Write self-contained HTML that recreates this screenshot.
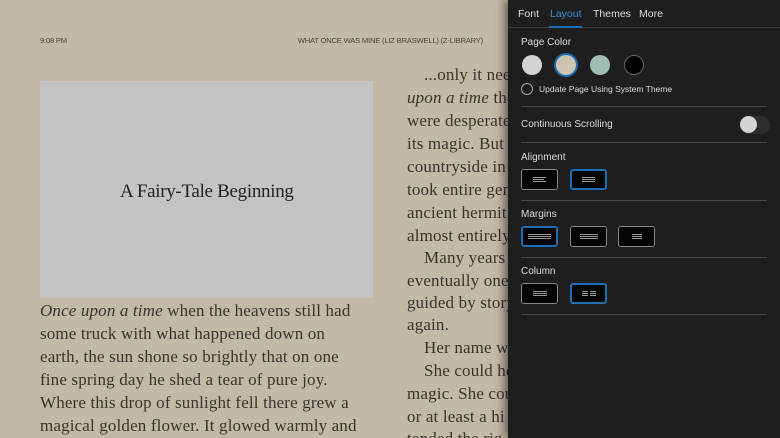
<!DOCTYPE html>
<html><head><meta charset="utf-8"><style>
*{margin:0;padding:0;box-sizing:border-box}
html,body{width:780px;height:438px;overflow:hidden}
body{background:#c2b9a6;position:relative;font-family:"Liberation Serif",serif;color:#3a332b}
.hd{position:absolute;top:36px;font:7.6px "Liberation Sans",sans-serif;color:#4a4438;letter-spacing:-0.2px;white-space:nowrap}
.img{position:absolute;left:40px;top:81px;width:333px;height:217px;background:#c4c4c4}
.ttl{position:absolute;left:120px;top:181px;font:19px "Liberation Serif",serif;color:#222;letter-spacing:-0.3px}
.l{position:absolute;white-space:nowrap;font-size:17px;line-height:23px;letter-spacing:0.15px}
.panel{position:absolute;left:508px;top:0;width:272px;height:438px;background:#1e1e1e;box-shadow:-4px 0 8px rgba(0,0,0,.45);font-family:"Liberation Sans",sans-serif;color:#ddd}
.p{position:absolute;font-size:10px;white-space:nowrap}
.tab{position:absolute;top:8px;font-size:10.5px;color:#ddd;white-space:nowrap}
.div{position:absolute;left:13px;width:246px;height:1px;background:#4a4a4a}
.c{position:absolute;top:55px;width:20px;height:20px;border-radius:50%}
.b{position:absolute;width:37px;height:21px;border:1px solid #888;border-radius:3px;background:#050505}
.b.s{border:2px solid #1a6fb5}
.ln{position:absolute;height:1px;background:#999}
</style></head><body>
<div class="hd" style="left:40px">9:08 PM</div>
<div class="hd" style="right:297px">WHAT ONCE WAS MINE (LIZ BRASWELL) (Z-LIBRARY)</div>
<div class="img"></div>
<div class="ttl">A Fairy-Tale Beginning</div>
<div class="l" style="left:40px;top:299px"><i>Once upon a time</i> when the heavens still had</div>
<div class="l" style="left:40px;top:322px">some truck with what happened down on</div>
<div class="l" style="left:40px;top:345px">earth, the sun shone so brightly that on one</div>
<div class="l" style="left:40px;top:368px">fine spring day he shed a tear of pure joy.</div>
<div class="l" style="left:40px;top:391px">Where this drop of sunlight fell there grew a</div>
<div class="l" style="left:40px;top:414px">magical golden flower. It glowed warmly and</div>

<div class="l" style="left:424px;top:63px">...only it needed</div>
<div class="l" style="left:407px;top:86px"><i>upon a time</i> the</div>
<div class="l" style="left:407px;top:109px">were desperate</div>
<div class="l" style="left:407px;top:132px">its magic. But</div>
<div class="l" style="left:407px;top:155px">countryside in</div>
<div class="l" style="left:407px;top:178px">took entire gen</div>
<div class="l" style="left:407px;top:201px">ancient hermit</div>
<div class="l" style="left:407px;top:224px">almost entirely</div>
<div class="l" style="left:424px;top:246px">Many years</div>
<div class="l" style="left:407px;top:269px">eventually one</div>
<div class="l" style="left:407px;top:291px">guided by story</div>
<div class="l" style="left:407px;top:313px">again.</div>
<div class="l" style="left:424px;top:336px">Her name was</div>
<div class="l" style="left:424px;top:359px">She could he</div>
<div class="l" style="left:407px;top:382px">magic. She cou</div>
<div class="l" style="left:407px;top:405px">or at least a hi</div>
<div class="l" style="left:407px;top:427px">tended the rig</div>

<div class="panel">
<div class="tab" style="left:10px">Font</div>
<div class="tab" style="left:42px;color:#3d8fd6">Layout</div>
<div class="tab" style="left:85px">Themes</div>
<div class="tab" style="left:131px">More</div>
<div style="position:absolute;left:0;top:27px;width:272px;height:1px;background:#3c3c3c"></div>
<div style="position:absolute;left:41px;top:26px;width:33px;height:2px;background:#1a6fb5"></div>
<div class="p" style="left:13px;top:37px">Page Color</div>
<div class="c" style="left:14px;background:#d3d3d3"></div>
<div class="c" style="left:48px;background:#cdc4b1;box-shadow:0 0 0 2px #1a6fb5"></div>
<div class="c" style="left:82px;background:#9fbdb2"></div>
<div class="c" style="left:116px;background:#000;border:1px solid #666"></div>
<div style="position:absolute;left:13px;top:83px;width:12px;height:12px;border:1px solid #aaa;border-radius:50%"></div>
<div class="p" style="left:31px;top:84px;font-size:8.5px">Update Page Using System Theme</div>
<div class="div" style="top:106px"></div>
<div class="p" style="left:13px;top:119px">Continuous Scrolling</div>
<div style="position:absolute;left:232px;top:116px;width:30px;height:18px;border-radius:9px;background:#2d2d2d"></div>
<div style="position:absolute;left:232px;top:116px;width:17px;height:17px;border-radius:50%;background:#d4d4d4"></div>
<div class="div" style="top:142px"></div>
<div class="p" style="left:13px;top:152px">Alignment</div>
<div class="b" style="left:13px;top:169px"><div class="ln" style="left:11px;top:7px;width:13px"></div><div class="ln" style="left:11px;top:9px;width:11px"></div><div class="ln" style="left:11px;top:11px;width:13px"></div></div>
<div class="b s" style="left:62px;top:169px"><div class="ln" style="left:10px;top:6px;width:13px"></div><div class="ln" style="left:10px;top:8px;width:13px"></div><div class="ln" style="left:10px;top:10px;width:13px"></div></div>
<div class="div" style="top:200px"></div>
<div class="p" style="left:13px;top:209px">Margins</div>
<div class="b s" style="left:13px;top:226px"><div class="ln" style="left:5px;top:6px;width:23px"></div><div class="ln" style="left:5px;top:8px;width:23px"></div><div class="ln" style="left:5px;top:10px;width:23px"></div></div>
<div class="b" style="left:62px;top:226px"><div class="ln" style="left:9px;top:7px;width:18px"></div><div class="ln" style="left:9px;top:9px;width:18px"></div><div class="ln" style="left:9px;top:11px;width:18px"></div></div>
<div class="b" style="left:110px;top:226px"><div class="ln" style="left:13px;top:7px;width:10px"></div><div class="ln" style="left:13px;top:9px;width:10px"></div><div class="ln" style="left:13px;top:11px;width:10px"></div></div>
<div class="div" style="top:257px"></div>
<div class="p" style="left:13px;top:266px">Column</div>
<div class="b" style="left:13px;top:283px"><div class="ln" style="left:11px;top:7px;width:14px"></div><div class="ln" style="left:11px;top:9px;width:14px"></div><div class="ln" style="left:11px;top:11px;width:14px"></div></div>
<div class="b s" style="left:62px;top:283px"><div class="ln" style="left:10px;top:6px;width:6px"></div><div class="ln" style="left:10px;top:8px;width:6px"></div><div class="ln" style="left:10px;top:10px;width:6px"></div><div class="ln" style="left:18px;top:6px;width:6px"></div><div class="ln" style="left:18px;top:8px;width:6px"></div><div class="ln" style="left:18px;top:10px;width:6px"></div></div>
<div class="div" style="top:314px"></div>
</div>
</body></html>
